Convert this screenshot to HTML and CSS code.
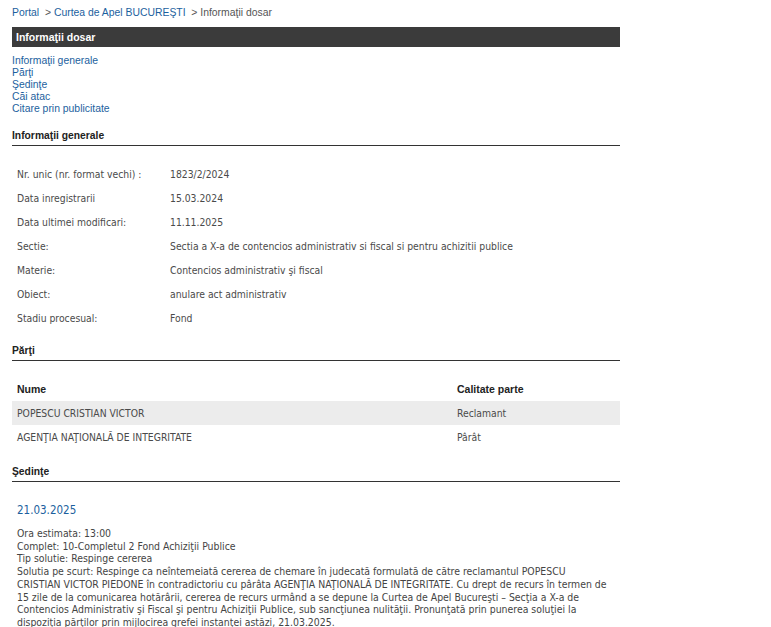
FILE: index.html
```html
<!DOCTYPE html>
<html lang="ro">
<head>
<meta charset="utf-8">
<title>Informaţii dosar</title>
<link rel="stylesheet" href="styles.css">
</head>
<body>
<div class="page">
  <div class="crumbs"><a href="#">Portal</a>&nbsp; &gt; <a href="#">Curtea de Apel BUCUREŞTI</a>&nbsp; &gt; Informaţii dosar</div>
  <div class="bar">Informaţii dosar</div>
  <ul class="toc">
    <li><a href="#">Informaţii generale</a></li>
    <li><a href="#">Părţi</a></li>
    <li><a href="#">Şedinţe</a></li>
    <li><a href="#">Căi atac</a></li>
    <li><a href="#">Citare prin publicitate</a></li>
  </ul>

  <h2 class="sec first">Informaţii generale</h2>
  <table class="info">
    <tr><td class="lbl">Nr. unic (nr. format vechi) :</td><td>1823/2/2024</td></tr>
    <tr><td class="lbl">Data inregistrarii</td><td>15.03.2024</td></tr>
    <tr><td class="lbl">Data ultimei modificari:</td><td>11.11.2025</td></tr>
    <tr><td class="lbl">Sectie:</td><td>Sectia a X-a de contencios administrativ si fiscal si pentru achizitii publice</td></tr>
    <tr><td class="lbl">Materie:</td><td>Contencios administrativ şi fiscal</td></tr>
    <tr><td class="lbl">Obiect:</td><td>anulare act administrativ</td></tr>
    <tr><td class="lbl">Stadiu procesual:</td><td>Fond</td></tr>
  </table>

  <h2 class="sec">Părţi</h2>
  <table class="parti">
    <tr class="head"><th class="c1">Nume</th><th>Calitate parte</th></tr>
    <tr class="alt"><td class="c1">POPESCU CRISTIAN VICTOR</td><td>Reclamant</td></tr>
    <tr><td class="c1">AGENŢIA NAŢIONALĂ DE INTEGRITATE</td><td>Pârât</td></tr>
  </table>

  <h2 class="sec">Şedinţe</h2>
  <div class="sedinta">
    <div class="date">21.03.2025</div>
    <div class="details">
      Ora estimata: 13:00<br>
      Complet: 10-Completul 2 Fond Achiziţii Publice<br>
      Tip solutie: Respinge cererea<br>
      Solutia pe scurt: Respinge ca neîntemeiată cererea de chemare în judecată formulată de către reclamantul POPESCU CRISTIAN VICTOR PIEDONE în contradictoriu cu pârâta AGENŢIA NAŢIONALĂ DE INTEGRITATE. Cu drept de recurs în termen de 15 zile de la comunicarea hotărârii, cererea de recurs urmând a se depune la Curtea de Apel Bucureşti – Secţia a X-a de Contencios Administrativ şi Fiscal şi pentru Achiziţii Publice, sub sancţiunea nulităţii. Pronunţată prin punerea soluţiei la dispoziţia părţilor prin mijlocirea grefei instanţei astăzi, 21.03.2025.
    </div>
  </div>
</div>
</body>
</html>
```
FILE: styles.css
```css
html, body {
  margin: 0;
  padding: 0;
  background: #fff;
}
body {
  font-family: "Liberation Sans", Arial, sans-serif;
  font-size: 10.4px;
  color: #333;
}
a {
  color: #1c5f9e;
  text-decoration: none;
}
.page {
  width: 608px;
  padding: 6px 12px 0 12px;
}
.crumbs {
  color: #555;
  line-height: 13px;
  height: 13px;
}
.bar {
  margin-top: 8px;
  height: 20px;
  line-height: 20px;
  background: #3b3b3b;
  color: #fff;
  font-weight: bold;
  font-size: 10.5px;
  padding-left: 4px;
}
.toc {
  list-style: none;
  margin: 8px 0 0 0;
  padding: 0;
}
.toc li {
  line-height: 12px;
  height: 12px;
}
.sec {
  font-family: "Liberation Sans", Arial, sans-serif;
  font-size: 10.3px;
  font-weight: bold;
  color: #222;
  margin: 0;
  padding: 7px 0 2px 0;
  line-height: 14px;
  border-bottom: 1px solid #333;
}
.sec.first {
  margin-top: 7px;
}
.info, .parti {
  width: 100%;
  border-collapse: collapse;
  font-family: "DejaVu Sans Condensed", "DejaVu Sans", sans-serif;
  font-size: 10.3px;
  color: #4a4a4a;
}
.info {
  margin-top: 16px;
  margin-bottom: 7px;
}
.info td {
  height: 24px;
  padding: 0 5px;
  vertical-align: middle;
}
.info td.lbl {
  width: 143px;
}
.parti {
  margin-top: 16px;
  margin-bottom: 9px;
}
.parti th {
  text-align: left;
  font-family: "Liberation Sans", Arial, sans-serif;
  font-size: 10.5px;
  font-weight: bold;
  color: #222;
  height: 24px;
  padding: 0 5px;
}
.parti td {
  height: 24px;
  padding: 0 5px;
}
.parti .c1 {
  width: 430px;
}
.parti tr.alt td {
  background: #ececec;
}
.sedinta {
  padding: 21px 8px 0 5px;
  font-family: "DejaVu Sans Condensed", "DejaVu Sans", sans-serif;
}
.date {
  color: #1c5f9e;
  font-size: 11.5px;
  line-height: 14px;
}
.details {
  margin-top: 10px;
  font-size: 10.4px;
  line-height: 12.7px;
  color: #444;
}
```
